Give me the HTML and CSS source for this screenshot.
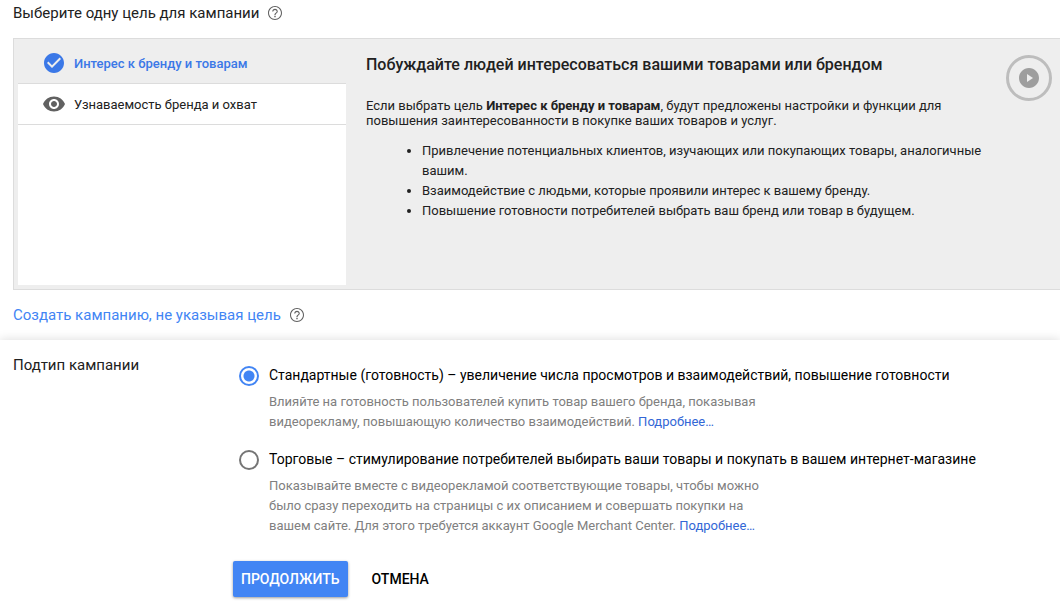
FILE: index.html
```
<!DOCTYPE html>
<html lang="ru">
<head>
  <meta charset="UTF-8">
  <meta name="viewport" content="width=device-width, initial-scale=1.0">
  <title>Новая кампания</title>
  <link rel="stylesheet" href="styles.css">
</head>
<body>
  <section class="goal-section">
    <h2 class="section-title">
      Выберите одну цель для кампании
      <svg class="help-icon" viewBox="2 2 20 20"><path d="M11 18h2v-2h-2v2zm1-16C6.48 2 2 6.48 2 12s4.48 10 10 10 10-4.48 10-10S17.52 2 12 2zm0 18.500c-4.690 0-8.500-3.810-8.500-8.500s3.810-8.500 8.500-8.500 8.500 3.810 8.500 8.500-3.810 8.500-8.500 8.500zM12 6c-2.210 0-4 1.790-4 4h1.600c0-1.300 1.100-2.400 2.400-2.400s2.400 1.100 2.400 2.400c0 2-3.200 1.750-3.200 5h1.600c0-2.250 3.200-2.500 3.200-5 0-2.210-1.790-4-4-4z"/></svg>
    </h2>
    <div class="goal-panel">
      <div class="goal-list">
        <button type="button" class="goal-item selected">
          <svg class="goal-icon" viewBox="0 0 24 24"><path d="M12 2C6.48 2 2 6.48 2 12s4.48 10 10 10 10-4.48 10-10S17.52 2 12 2zm-2 15l-5-5 1.41-1.41L10 14.17l7.59-7.59L19 8l-9 9z"/></svg>
          Интерес к бренду и товарам
        </button>
        <button type="button" class="goal-item">
          <svg class="goal-icon" viewBox="0 0 24 24"><path d="M12 4.500C7 4.500 2.730 7.610 1 12c1.730 4.390 6 7.500 11 7.500s9.270-3.110 11-7.500c-1.730-4.390-6-7.500-11-7.500zM12 17c-2.760 0-5-2.240-5-5s2.240-5 5-5 5 2.240 5 5-2.240 5-5 5zm0-8c-1.660 0-3 1.340-3 3s1.340 3 3 3 3-1.340 3-3-1.340-3-3-3z"/></svg>
          Узнаваемость бренда и охват
        </button>
      </div>
      <div class="goal-details">
        <h3>Побуждайте людей интересоваться вашими товарами или брендом</h3>
        <p>Если выбрать цель <b>Интерес к бренду и товарам</b>, будут предложены настройки и функции для повышения заинтересованности в покупке ваших товаров и услуг.</p>
        <ul>
          <li>Привлечение потенциальных клиентов, изучающих или покупающих товары, аналогичные вашим.</li>
          <li>Взаимодействие с людьми, которые проявили интерес к вашему бренду.</li>
          <li>Повышение готовности потребителей выбрать ваш бренд или товар в будущем.</li>
        </ul>
      </div>
      <button type="button" class="play-button" aria-label="Смотреть видео">
        <svg viewBox="0 0 24 24"><path d="M12 2C6.48 2 2 6.48 2 12s4.48 10 10 10 10-4.48 10-10S17.52 2 12 2zm-2 14V8l6 4-6 4z"/></svg>
      </button>
    </div>
    <div class="no-goal">
      <a href="#">Создать кампанию, не указывая цель</a>
      <svg class="help-icon" viewBox="2 2 20 20"><path d="M11 18h2v-2h-2v2zm1-16C6.48 2 2 6.48 2 12s4.48 10 10 10 10-4.48 10-10S17.52 2 12 2zm0 18.500c-4.690 0-8.500-3.810-8.500-8.500s3.810-8.500 8.500-8.500 8.500 3.810 8.500 8.500-3.810 8.500-8.500 8.500zM12 6c-2.210 0-4 1.790-4 4h1.600c0-1.300 1.100-2.400 2.400-2.400s2.400 1.100 2.400 2.400c0 2-3.200 1.750-3.200 5h1.600c0-2.250 3.200-2.500 3.200-5 0-2.210-1.790-4-4-4z"/></svg>
    </div>
  </section>

  <form class="subtype-section">
    <h2 class="subtype-title">Подтип кампании</h2>
    <div class="subtype-content">
      <div class="option">
        <input type="radio" name="subtype" id="standard" checked>
        <div>
          <label for="standard">Стандартные (готовность) – увеличение числа просмотров и взаимодействий, повышение готовности</label>
          <p>Влияйте на готовность пользователей купить товар вашего бренда, показывая видеорекламу, повышающую количество взаимодействий. <a href="#">Подробнее…</a></p>
        </div>
      </div>
      <div class="option">
        <input type="radio" name="subtype" id="shopping">
        <div>
          <label for="shopping">Торговые – стимулирование потребителей выбирать ваши товары и покупать в вашем интернет-магазине</label>
          <p>Показывайте вместе с видеорекламой соответствующие товары, чтобы можно было сразу переходить на страницы с их описанием и совершать покупки на вашем сайте. Для этого требуется аккаунт Google Merchant Center. <a href="#">Подробнее…</a></p>
        </div>
      </div>
      <div class="actions">
        <button type="submit" class="btn btn-primary">Продолжить</button>
        <button type="button" class="btn">Отмена</button>
      </div>
    </div>
  </form>
</body>
</html>
```
FILE: styles.css
```
* {
  box-sizing: border-box;
}
body {
  margin: 0;
  font-family: Roboto, sans-serif;
  font-size: 13px;
  line-height: 20px;
  color: #212121;
  background: #fff;
}
h2, h3, p, ul {
  margin: 0;
}
a {
  text-decoration: none;
}
button {
  font-family: inherit;
  border: none;
  background: none;
  cursor: pointer;
}
.goal-section {
  padding: 3px 0 15px 13px;
}
.section-title, .no-goal {
  display: flex;
  align-items: center;
  gap: 9px;
  font-size: 15px;
  font-weight: 400;
}
.help-icon {
  width: 14px;
  height: 14px;
  fill: #616161;
}
.goal-panel {
  display: flex;
  margin: 15px 0;
  padding: 4px 8px 4px 4px;
  background: #eee;
  border: 1px solid #dcdcdc;
  border-right: none;
}
.goal-list {
  flex: none;
  width: 328px;
  min-height: 242px;
  background: #fff;
}
.goal-item {
  display: flex;
  align-items: center;
  gap: 8px;
  width: 100%;
  height: 41px;
  padding: 0 24px;
  font-size: 13px;
  color: #212121;
  border-bottom: 1px solid #dcdcdc;
}
.goal-item.selected {
  color: #3b78e7;
  font-weight: 500;
  background: #eee;
}
.goal-icon {
  width: 24px;
  height: 24px;
  fill: #616161;
}
.selected .goal-icon {
  fill: #3b78e7;
}
.goal-details {
  flex: 1;
  padding: 12px 20px;
}
.goal-details h3 {
  font-size: 16px;
  font-weight: 500;
}
.goal-details p {
  max-width: 600px;
  margin-top: 23px;
  line-height: 15px;
}
.goal-details ul {
  margin-top: 13px;
  padding-left: 56px;
}
.play-button {
  flex: none;
  display: flex;
  align-items: center;
  justify-content: center;
  width: 46px;
  height: 46px;
  margin-top: 12px;
  padding: 0;
  border: 3px solid #bdbdbd;
  border-radius: 50%;
}
.play-button svg {
  width: 24px;
  height: 24px;
  fill: #9e9e9e;
}
.no-goal a {
  color: #4285f4;
}

.subtype-section {
  display: flex;
  padding: 15px 13px 7px;
  background: #fff;
  box-shadow: 0 0 10px rgba(0, 0, 0, 0.15);
}
.subtype-title {
  flex: none;
  width: 220px;
  font-size: 15px;
  font-weight: 400;
}
.subtype-content {
  flex: 1;
  padding-top: 10px;
}
.option {
  display: flex;
  gap: 10px;
  margin: 0 0 17px 6px;
}
.option input {
  flex: none;
  appearance: none;
  width: 20px;
  height: 20px;
  margin: 1px 0 0;
  border: 2px solid #757575;
  border-radius: 50%;
}
.option input:checked {
  border-color: #4285f4;
  background: radial-gradient(circle, #4285f4 5px, #fff 6px);
}
.option label {
  display: block;
  font-size: 14px;
  color: #000;
}
.option p {
  max-width: 500px;
  margin-top: 7px;
  color: #808080;
}
.option p a {
  color: #3367d6;
}
.actions {
  display: flex;
  gap: 16px;
  padding-top: 8px;
}
.btn {
  height: 36px;
  padding: 0 8px;
  font-size: 14px;
  font-weight: 500;
  text-transform: uppercase;
  color: #000;
  border-radius: 2px;
}
.btn-primary {
  color: #fff;
  background: #4285f4;
  box-shadow: 0 1px 3px rgba(0, 0, 0, 0.4);
}
```
